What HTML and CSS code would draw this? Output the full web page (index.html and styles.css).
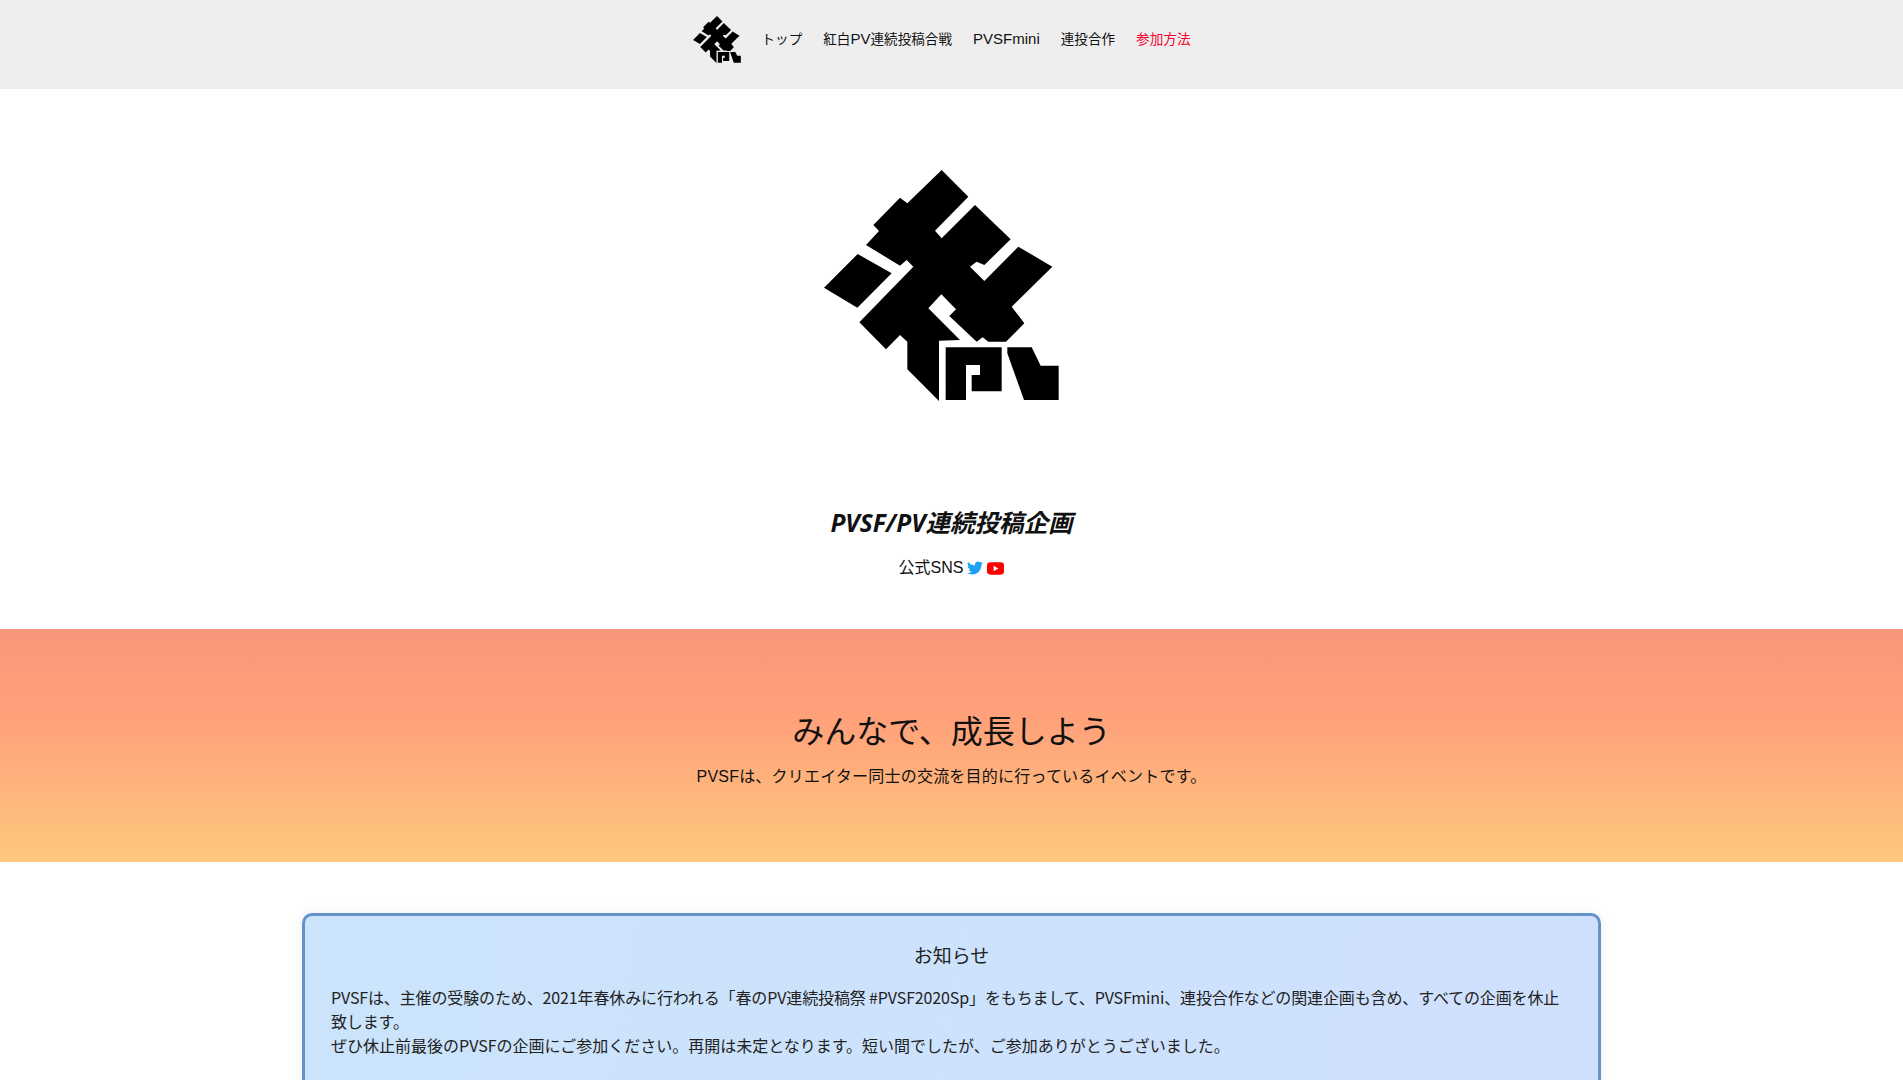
FILE: index.html
```html
<!DOCTYPE html>
<html lang="ja">
<head>
<meta charset="utf-8">
<title>PVSF/PV連続投稿企画</title>
<link rel="stylesheet" href="styles.css">
</head>
<body>
<svg class="defs" width="0" height="0" aria-hidden="true">
  <symbol id="logo" viewBox="72 60 705 693">
    <path d="M425 60 505 140 405 242 425 265 525 165 632 268 553 345 530 335 510 350 553 393 655 290 757 350 635 470 673 520 618 575 565 575 548 562 530 575 448 498 468 478 424 433 385 475 480 570 417 572 417 753 322 658 322 575 300 555 258 598 178 517 340 350 320 330 300 347 198 285 237 243 220 225 300 143 322 160Z"/>
    <path d="M173 312 275 370 172 473 72 413Z"/>
    <path d="M437 592H605V724H515V675H540V645H498V750H437Z"/>
    <path d="M622 592H695L722 647H776V750H672L622 610Z"/>
  </symbol>
</svg>
<header class="navbar">
  <svg class="nav-logo"><use href="#logo"/></svg>
  <nav class="nav-links">
    <a class="nav-link">トップ</a>
    <a class="nav-link">紅白<span class="latin">PV</span>連続投稿合戦</a>
    <a class="nav-link"><span class="latin">PVSFmini</span></a>
    <a class="nav-link">連投合作</a>
    <a class="nav-link nav-link-accent">参加方法</a>
  </nav>
</header>
<section class="hero">
  <svg class="hero-logo"><use href="#logo"/></svg>
  <h1 class="hero-title">PVSF/PV連続投稿企画</h1>
  <p class="sns">公式SNS
    <svg class="sns-icon" viewBox="0 0 24 24"><path fill="#1da1f2" d="M23.953 4.57a10 10 0 01-2.825.775 4.958 4.958 0 002.163-2.723c-.951.555-2.005.959-3.127 1.184a4.92 4.92 0 00-8.384 4.482C7.69 8.095 4.067 6.13 1.64 3.162a4.822 4.822 0 00-.666 2.475c0 1.71.87 3.213 2.188 4.096a4.904 4.904 0 01-2.228-.616v.06a4.923 4.923 0 003.946 4.827 4.996 4.996 0 01-2.212.085 4.936 4.936 0 004.604 3.417 9.867 9.867 0 01-6.102 2.105c-.39 0-.779-.023-1.17-.067a13.995 13.995 0 007.557 2.209c9.053 0 13.998-7.496 13.998-13.985 0-.21 0-.42-.015-.63A9.935 9.935 0 0024 4.59z"/></svg>
    <svg class="sns-icon sns-icon-yt" viewBox="0 0 18 13"><rect width="18" height="13" rx="3.5" fill="#f00"/><path fill="#fff" d="M7 3.7 12 6.5 7 9.3Z"/></svg>
  </p>
</section>
<section class="band">
  <h2 class="band-title">みんなで、成長しよう</h2>
  <p class="band-text">PVSFは、クリエイター同士の交流を目的に行っているイベントです。</p>
</section>
<main class="content">
  <article class="notice">
    <h3 class="notice-title">お知らせ</h3>
    <p class="notice-text notice-text-first">PVSFは、主催の受験のため、2021年春休みに行われる「春のPV連続投稿祭 #PVSF2020Sp」をもちまして、PVSFmini、連投合作などの関連企画も含め、すべての企画を休止致します。</p>
    <p class="notice-text">ぜひ休止前最後のPVSFの企画にご参加ください。再開は未定となります。短い間でしたが、ご参加ありがとうございました。</p>
  </article>
</main>
</body>
</html>
```

FILE: styles.css
```css
html, body {
  margin: 0;
  padding: 0;
  background: #fff;
}
body {
  font-family: "Liberation Sans", "Noto Sans CJK JP", sans-serif;
  color: #111;
  height: 1080px;
  overflow: hidden;
}
.defs {
  position: absolute;
}
.navbar {
  display: flex;
  justify-content: center;
  align-items: flex-start;
  height: 89px;
  box-sizing: border-box;
  padding: 16px 9px 0 0;
  background: #eeeeef;
}
.nav-logo {
  width: 48px;
  height: 47px;
  margin-right: 10px;
}
.nav-links {
  display: flex;
  height: 47px;
  align-items: center;
}
.nav-link {
  padding: 0 10.5px;
  font-size: 13.6px;
  line-height: 18px;
  color: #111;
}
.latin {
  font-size: 15px;
}
.nav-link-accent {
  color: #f5002d;
}
.hero {
  display: flex;
  flex-direction: column;
  align-items: center;
  height: 540px;
  box-sizing: border-box;
  padding-top: 81px;
}
.hero-logo {
  width: 235px;
  height: 231px;
  margin-left: -20px;
}
.hero-title {
  margin: 106px 0 0;
  font-family: "Noto Sans", "Noto Sans CJK JP", sans-serif;
  font-size: 24.5px;
  line-height: 32px;
  font-style: italic;
  font-weight: 700;
  color: #111;
}
.sns {
  display: flex;
  align-items: center;
  gap: 4px;
  margin: 18px 0 0;
  font-size: 16px;
  line-height: 22px;
}
.sns-icon {
  width: 16px;
  height: 16px;
}
.sns-icon-yt {
  width: 17px;
  height: 13px;
}
.band {
  height: 233px;
  box-sizing: border-box;
  padding-top: 82px;
  text-align: center;
  background: linear-gradient(180deg, #f7967b 0%, #ffa27a 40%, #fec87e 100%);
}
.band-title {
  margin: 0;
  font-size: 32px;
  line-height: 42px;
  font-weight: 400;
  color: #111;
}
.band-text {
  margin: 12px 0 0;
  font-size: 16px;
  line-height: 24px;
  letter-spacing: .22px;
  color: #111;
}
.content {
  padding: 51px 0 0;
  display: flex;
  justify-content: center;
}
.notice {
  width: 1299px;
  box-sizing: border-box;
  padding: 25px 26px 40px;
  border: 3px solid #6393c9;
  border-radius: 10px;
  background: linear-gradient(100deg, #cbe4fb, #cfe0fd);
  box-shadow: 0 0 12px rgba(99, 147, 201, .15);
}
.notice-title {
  margin: 0 0 12px;
  font-size: 19px;
  line-height: 32px;
  font-weight: 400;
  text-align: center;
  color: #222;
}
.notice-text {
  margin: 0;
  font-size: 16px;
  line-height: 24px;
  color: #222;
  font-family: "Noto Sans CJK JP", sans-serif;
}
.notice-text-first {
  letter-spacing: -.13px;
}
```
